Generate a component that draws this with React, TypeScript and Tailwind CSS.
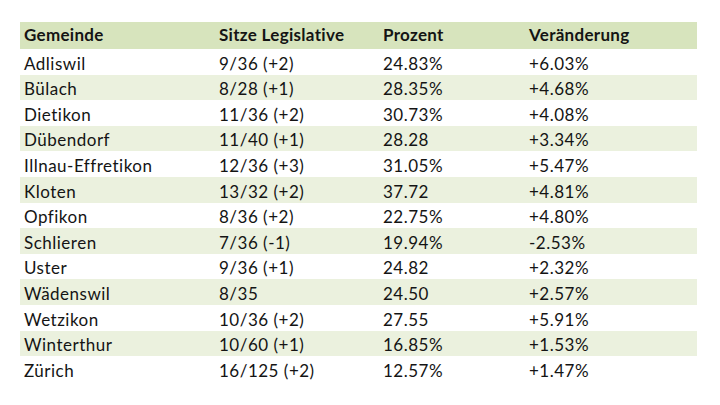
import React from "react";

const rows: [string, string, string, string][] = [
  ["Adliswil", "9/36 (+2)", "24.83%", "+6.03%"],
  ["Bülach", "8/28 (+1)", "28.35%", "+4.68%"],
  ["Dietikon", "11/36 (+2)", "30.73%", "+4.08%"],
  ["Dübendorf", "11/40 (+1)", "28.28", "+3.34%"],
  ["Illnau-Effretikon", "12/36 (+3)", "31.05%", "+5.47%"],
  ["Kloten", "13/32 (+2)", "37.72", "+4.81%"],
  ["Opfikon", "8/36 (+2)", "22.75%", "+4.80%"],
  ["Schlieren", "7/36 (-1)", "19.94%", "-2.53%"],
  ["Uster", "9/36 (+1)", "24.82", "+2.32%"],
  ["Wädenswil", "8/35", "24.50", "+2.57%"],
  ["Wetzikon", "10/36 (+2)", "27.55", "+5.91%"],
  ["Winterthur", "10/60 (+1)", "16.85%", "+1.53%"],
  ["Zürich", "16/125 (+2)", "12.57%", "+1.47%"],
];

export default function App() {
  return (
    <div
      className="w-[720px] h-[405px] bg-white pt-[22px] pl-[20px] text-[#141414]"
      style={{ fontFamily: "Lato, 'Liberation Sans', sans-serif" }}
    >
      <div className="w-[677px]">
        <div className="grid grid-cols-[195px_164px_146px_172px] h-[27px] bg-[#d7e4bd] font-bold text-[17px] tracking-[0.3px]">
          {["Gemeinde", "Sitze Legislative", "Prozent", "Veränderung"].map((h) => (
            <div key={h} className="flex items-end pb-[3px] pl-[4px]">
              {h}
            </div>
          ))}
        </div>
        {rows.map((r, i) => (
          <div
            key={r[0]}
            className={`grid grid-cols-[195px_164px_146px_172px] h-[25.6px] text-[17px] tracking-[0.5px] ${
              i % 2 === 1 ? "bg-[#ebf1de]" : "bg-white"
            }`}
          >
            {r.map((c, j) => (
              <div key={j} className="flex items-end pb-[1px] pl-[4px] leading-none">
                <span className="pb-[2px]">{c}</span>
              </div>
            ))}
          </div>
        ))}
      </div>
    </div>
  );
}
